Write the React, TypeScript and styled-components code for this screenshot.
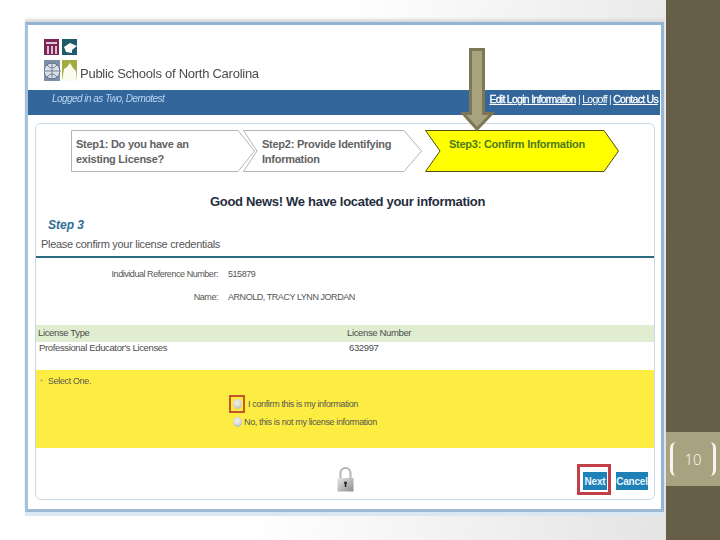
import React from "react";
import styled, { createGlobalStyle } from "styled-components";

const Global = createGlobalStyle`
  html, body { margin: 0; padding: 0; width: 720px; height: 540px; overflow: hidden; background: #fff; }
  * { box-sizing: border-box; }
`;

const Page = styled.div`
  width: 720px; height: 540px; display: flex;
  font-family: "Liberation Sans", Arial, sans-serif;
`;
const Slide = styled.div`
  width: 666px; height: 540px; padding: 22px 2px 0 25px;
  background: linear-gradient(100deg, #fff 45%, #e4e4e4 100%);
`;
const Frame = styled.div`
  position: relative; width: 639px; height: 490px; background: #fff;
  border-top: 3px solid #94b3d3; border-left: 3px solid #a3c2e0; border-right: 3px solid #94b5d8;
  border-bottom: 3px solid #9db9d6;
  box-shadow: 0 4px 1px #dbe7f3, 0 -3px 2px #dcdcdc;
  display: flex; flex-direction: column;
`;
const Blurred = styled.div`
  display: flex; flex-direction: column; flex: 1; filter: blur(0.45px);
`;
const Header = styled.header`
  height: 65px; padding: 14px 0 0 16px; display: flex; align-items: flex-end; gap: 2px;
`;
const Logo = styled.svg`
  width: 34px; height: 43px; margin-bottom: 8px; flex: none;
`;
const Brand = styled.div`
  font-size: 13px; color: #4b4b4b; margin-bottom: 8px; letter-spacing: -0.26px; line-height: 16px;
`;
const Bar = styled.div`
  height: 25px; margin-right: 1px; background: #33679b; display: flex; justify-content: space-between;
  align-items: flex-start; padding: 2px 2px 0 24px; color: #fff;
`;
const LoggedIn = styled.span`
  font-size: 10px; line-height: 13px; font-style: italic; color: #b8d4f0; letter-spacing: -0.55px;
`;
const BarLinks = styled.span`
  font-size: 10.5px; line-height: 14px; letter-spacing: -0.72px; color: #e8f0f8;
`;
const BarLink = styled.a<{ $bold?: boolean }>`
  color: #fff; text-decoration: underline; ${(p) => (p.$bold ? "-webkit-text-stroke: 0.3px #fff;" : "")}
`;
const Card = styled.main`
  margin: 8px 6px 9px 7px; flex: 1; border: 1px solid #cbd9e6; border-radius: 6px;
  background: #fff; display: flex; flex-direction: column; position: relative;
`;
const Steps = styled.div`
  display: flex; height: 42px; margin: 6px 0 0 35px;
`;
const Step = styled.div<{ $w: number; $left: number; $inset: number; $active?: boolean }>`
  position: relative; width: ${(p) => p.$w}px; margin-left: ${(p) => p.$left}px; height: 42px;
  padding: 7px 0 0 ${(p) => p.$inset}px;
  font-size: 11px; line-height: 15px; font-weight: 700; letter-spacing: -0.25px;
  color: ${(p) => (p.$active ? "#4d7a1c" : "#626262")};
  span { position: relative; display: block; }
  svg { position: absolute; inset: 0; width: 100%; height: 100%; }
`;
const Headline = styled.h2`
  margin: 21px 0 0; text-align: center; font-size: 13px; line-height: 17px; font-weight: 700;
  color: #1f2d3d; letter-spacing: -0.3px; padding-left: 5px;
`;
const StepLabel = styled.div`
  margin: 8px 0 0 12px; font-size: 12px; line-height: 14px; font-style: italic; font-weight: 700;
  color: #2f6d92;
`;
const Confirm = styled.div`
  margin: 5px 0 0 5px; font-size: 11px; line-height: 14px; color: #555; letter-spacing: -0.3px;
`;
const Rule = styled.div`
  height: 2px; margin-top: 5px; background: #2d6b80;
`;
const Details = styled.dl`
  margin: 10px 0 0; display: grid; grid-template-columns: 182px 1fr; column-gap: 10px; row-gap: 10px;
  font-size: 9px; line-height: 13px; color: #555; letter-spacing: -0.45px;
  dt { text-align: right; }
  dd { margin: 0; }
`;
const LicenseGrid = styled.div`
  margin-top: 21px; display: grid; grid-template-columns: 309px 1fr; font-size: 9.5px; line-height: 13px;
  color: #4c4c4c; letter-spacing: -0.36px;
`;
const LicenseHead = styled.div`
  background: #e1edd0; height: 17px; padding: 1px 0 0 2px;
`;
const LicenseCell = styled.div<{ $num?: boolean }>`
  height: 28px; line-height: 12px; padding: 0 0 0 ${(p) => (p.$num ? 4 : 3)}px;
`;
const YellowPanel = styled.section`
  height: 78px; background: #fdec41; padding: 5px 0 0 4px; position: relative;
  font-size: 9px; line-height: 13px; color: #555; letter-spacing: -0.36px;
  display: flex; flex-direction: column;
`;
const SelectOne = styled.div`
  padding-left: 8px; position: relative;
  &::before { content: "*"; position: absolute; left: 0; top: 0; color: #999; font-size: 8px; }
`;
const Options = styled.div`
  margin: 8px 0 0 190px; display: flex; flex-direction: column; gap: 3px;
`;
const Option = styled.label<{ $gap: number }>`
  display: flex; align-items: center; height: 15px; gap: ${(p) => p.$gap}px; padding-top: 1px;
`;
const RadioSlot = styled.span<{ $marked?: boolean }>`
  width: 14px; height: 16px; display: flex; align-items: center; justify-content: center; flex: none;
  ${(p) => (p.$marked ? "outline: 2px solid #c8562a; outline-offset: -1px;" : "")}
`;
const RadioDot = styled.span`
  width: 9px; height: 10px; border-radius: 50%; background: radial-gradient(circle at 45% 40%, #e8e8de 30%, #9ea3ad);
  display: block;
`;
const Footer = styled.footer`
  flex: 1; display: flex; align-items: flex-start; position: relative; padding: 18px 0 0 301px;
`;
const Lock = styled.svg`
  width: 17px; height: 26px; flex: none;
`;
const Actions = styled.div`
  position: absolute; right: 6px; top: 16px; display: flex; align-items: flex-start; gap: 5px;
`;
const NextRing = styled.div`
  border: 3px solid #c13f45; padding: 5px 1px 2px 3px; display: flex;
`;
const CancelSlot = styled.div`
  padding-top: 8px; display: flex;
`;
const ActionButton = styled.button<{ $w: number }>`
  width: ${(p) => p.$w}px; height: 18px; border: none; padding: 0; background: #1f80b8; color: #e6f6fb;
  font-family: "Liberation Sans", Arial, sans-serif; font-size: 10px; font-weight: 700; letter-spacing: -0.2px;
  white-space: nowrap; text-align: center;
`;
const Arrow = styled.svg`
  position: absolute; left: 433px; top: 23px; width: 34px; height: 84px;
`;
const Sidebar = styled.aside`
  width: 54px; height: 540px; background: #675e48; padding-top: 432px;
`;
const Badge = styled.div`
  height: 54px; background: #a8a280; display: flex; align-items: center; padding-left: 4px;
`;
const Bracket = styled.span<{ $right?: boolean }>`
  width: 6px; height: 34px; border: solid #f6f5ee; border-width: 0;
  ${(p) => (p.$right
    ? "border-right-width: 3px; border-radius: 0 7px 7px 0;"
    : "border-left-width: 3px; border-radius: 7px 0 0 7px;")}
`;
const PageNumber = styled.span`
  width: 34px; text-align: center; color: #fbfaf4; font-family: "Open Sans", sans-serif; font-size: 15px; font-weight: 300;
`;

function Chevron({ fill, stroke, w, notch, tip }: { fill: string; stroke: string; w: number; notch: number; tip: number }) {
  const pts = notch
    ? `0.5,0.5 ${w - tip},0.5 ${w - 0.5},21 ${w - tip},41.5 0.5,41.5 ${notch},21`
    : `0.5,0.5 ${w - tip},0.5 ${w - 0.5},21 ${w - tip},41.5 0.5,41.5`;
  return (
    <svg viewBox={`0 0 ${w} 42`} aria-hidden="true">
      <polygon points={pts} fill={fill} stroke={stroke} />
    </svg>
  );
}

export default function App() {
  return (
    <Page>
      <Global />
      <Slide>
        <Frame>
          <Blurred>
            <Header>
              <Logo viewBox="0 0 34 43" aria-hidden="true">
                <rect x="0" y="0" width="15" height="16" fill="#7e2456" />
                <path d="M2 4h11M4 7v8M8 7v8M12 7v8" stroke="#fff" strokeWidth="1.4" fill="none" />
                <rect x="18" y="0" width="15" height="16" fill="#1d5a6c" />
                <path d="M20 8 L26 4 L33 7 L28 11 L28 14 L22 13 Z" fill="#fff" />
                <rect x="0" y="21" width="16" height="21" fill="#7d90a8" />
                <circle cx="8" cy="32" r="8" fill="#d9dfe5" stroke="#5d6f85" />
                <path d="M0 32h16M8 24v16M3 26q5 6 10 0M3 38q5-6 10 0" stroke="#5d6f85" strokeWidth="0.8" fill="none" />
                <rect x="18" y="21" width="15" height="21" fill="#a2ad3f" />
                <path d="M18 42 L20 30 L23 28 L26 24 L29 29 L32 32 L33 42 Z" fill="#fbfbef" />
              </Logo>
              <Brand>Public Schools of North Carolina</Brand>
            </Header>
            <Bar>
              <LoggedIn>Logged in as Two, Demotest</LoggedIn>
              <BarLinks>
                <BarLink $bold>Edit Login Information</BarLink> | <BarLink>Logoff</BarLink> | <BarLink $bold>Contact Us</BarLink>
              </BarLinks>
            </Bar>
            <Card>
              <Steps>
                <Step $w={184} $left={0} $inset={5}>
                  <Chevron fill="#fff" stroke="#b5b5b5" w={184} notch={0} tip={17} />
                  <span>Step1: Do you have an<br />existing License?</span>
                </Step>
                <Step $w={179} $left={-12} $inset={19}>
                  <Chevron fill="#fff" stroke="#b5b5b5" w={179} notch={14} tip={18} />
                  <span>Step2: Provide Identifying<br />Information</span>
                </Step>
                <Step $w={194} $left={3} $inset={24} $active>
                  <Chevron fill="#ffff00" stroke="#4e4e10" w={194} notch={15} tip={15} />
                  <span>Step3: Confirm Information</span>
                </Step>
              </Steps>
              <Headline>Good News! We have located your information</Headline>
              <StepLabel>Step 3</StepLabel>
              <Confirm>Please confirm your license credentials</Confirm>
              <Rule />
              <Details>
                <dt>Individual Reference Number:</dt>
                <dd>515879</dd>
                <dt>Name:</dt>
                <dd>ARNOLD, TRACY LYNN JORDAN</dd>
              </Details>
              <LicenseGrid>
                <LicenseHead>License Type</LicenseHead>
                <LicenseHead>License Number</LicenseHead>
                <LicenseCell>Professional Educator's Licenses</LicenseCell>
                <LicenseCell $num>632997</LicenseCell>
              </LicenseGrid>
              <YellowPanel>
                <SelectOne>Select One.</SelectOne>
                <Options>
                  <Option $gap={4}><RadioSlot $marked><RadioDot /></RadioSlot>I confirm this is my information</Option>
                  <Option $gap={0}><RadioSlot><RadioDot /></RadioSlot>No, this is not my license information</Option>
                </Options>
              </YellowPanel>
              <Footer>
                <Lock viewBox="0 0 17 26" aria-hidden="true">
                  <defs>
                    <linearGradient id="lockBody" x1="0" y1="0" x2="1" y2="1">
                      <stop offset="0" stopColor="#e6e6e6" />
                      <stop offset="1" stopColor="#8c8c8c" />
                    </linearGradient>
                  </defs>
                  <path d="M3.5 12V7a5 5 0 0 1 10 0v5" fill="none" stroke="#b4b4b4" strokeWidth="2" />
                  <rect x="0.5" y="12" width="16" height="13.5" fill="url(#lockBody)" />
                  <circle cx="8.5" cy="17" r="1.4" fill="#222" />
                  <rect x="7.8" y="17" width="1.5" height="4" fill="#222" />
                </Lock>
                <Actions>
                  <NextRing><ActionButton $w={24}>Next</ActionButton></NextRing>
                  <CancelSlot><ActionButton $w={32}>Cancel</ActionButton></CancelSlot>
                </Actions>
              </Footer>
            </Card>
          </Blurred>
          <Arrow viewBox="0 0 34 84" aria-hidden="true">
            <path d="M9.5 1.5 H22.5 V65.5 H31 L16 81 L2 65.5 H9.5 Z" fill="#a8a27d" stroke="#7d7757" strokeWidth="3" />
          </Arrow>
        </Frame>
      </Slide>
      <Sidebar>
        <Badge>
          <Bracket />
          <PageNumber>10</PageNumber>
          <Bracket $right />
        </Badge>
      </Sidebar>
    </Page>
  );
}
